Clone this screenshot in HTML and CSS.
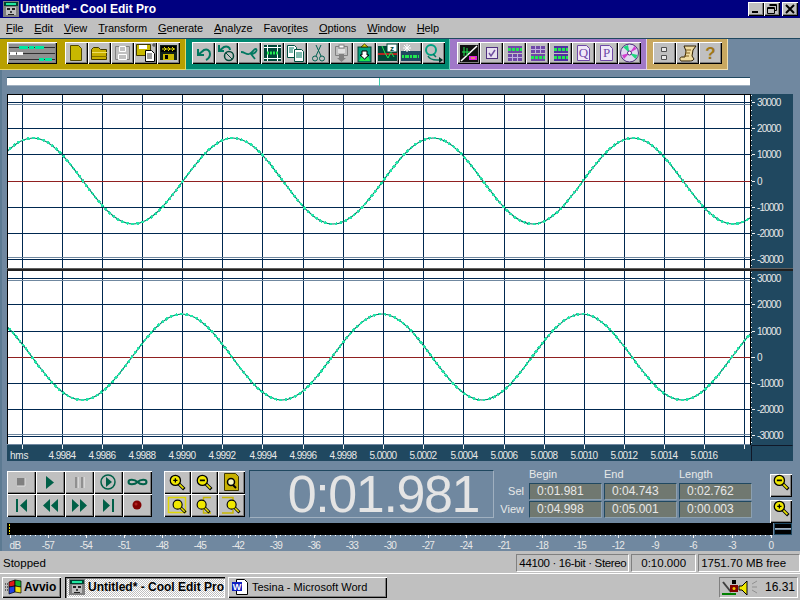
FILE: index.html
```html
<!DOCTYPE html>
<html>
<head>
  <title>Cool Edit Pro</title>
  <meta charset="UTF-8">
  <link rel="stylesheet" href="styles.css">
</head>
<body>
  <svg class="defs" width="0" height="0">
    <symbol id="app" viewBox="0 0 16 16">
      <rect width="16" height="16" fill="#808080"/>
      <rect x="1" y="1" width="14" height="4" fill="#004030"/>
      <rect x="3" y="2" width="10" height="2" fill="#20e8a0"/>
      <rect x="3" y="6" width="10" height="8" fill="#c0c0c0"/>
      <rect x="4" y="7" width="3" height="2" fill="#202020"/>
      <rect x="9" y="7" width="3" height="2" fill="#202020"/>
      <rect x="7" y="10" width="2" height="2" fill="#404040"/>
      <rect x="5" y="13" width="6" height="1" fill="#202020"/>
    </symbol>
    <symbol id="mag" viewBox="0 0 20 20">
      <line x1="11" y1="11" x2="18" y2="18" stroke="#000" stroke-width="4"/>
      <line x1="11" y1="11" x2="17" y2="17" stroke="#e8e000" stroke-width="2"/>
      <circle cx="7.5" cy="7.5" r="6" fill="#f0e800" stroke="#000" stroke-width="1.5"/>
    </symbol>
  </svg>

  <div class="titlebar">
    <svg class="app-icon"><use href="#app"/></svg>
    <span class="title-text">Untitled* - Cool Edit Pro</span>
    <div class="win-buttons">
      <div class="win-btn"><svg width="16" height="14"><rect x="4" y="9" width="6" height="2" fill="#000"/></svg></div>
      <div class="win-btn"><svg width="16" height="14"><path d="M5.5 2.5h7v6h-2M3.5 5.5h7v6h-7zM3.5 6.5h7M5.5 3.5h7" fill="none" stroke="#000"/></svg></div>
      <div class="win-btn win-close"><svg width="16" height="14"><path d="M4 3l8 8M12 3l-8 8" stroke="#000" stroke-width="2"/></svg></div>
    </div>
  </div>

  <div class="menubar">
    <span><u>F</u>ile</span>
    <span><u>E</u>dit</span>
    <span><u>V</u>iew</span>
    <span><u>T</u>ransform</span>
    <span><u>G</u>enerate</span>
    <span><u>A</u>nalyze</span>
    <span>Favo<u>r</u>ites</span>
    <span><u>O</u>ptions</span>
    <span><u>W</u>indow</span>
    <span><u>H</u>elp</span>
  </div>

  <div class="toolbar">
    <div class="group group-yellow">
      <div class="btn btn-wide">
        <svg width="50" height="22" viewBox="0 0 50 22">
          <rect x="2" y="2" width="46" height="18" fill="#909090"/>
          <path d="M2 5.5h46M2 11.5h46M2 17.5h46" stroke="#303030"/>
          <path d="M12 5.5h26" stroke="#00e8a0" stroke-width="3" stroke-dasharray="9 1 5 1"/>
          <path d="M3 11.5h13" stroke="#fff" stroke-width="3" stroke-dasharray="6 1 6 1"/>
          <path d="M32 17.5h13" stroke="#00e8a0" stroke-width="3" stroke-dasharray="5 1 7 1"/>
        </svg>
      </div>
      <div class="btn-gap"></div>
      <div class="btn"><svg width="23" height="22"><path d="M5.5 3.500h8l3 3v12h-11z" fill="#c8b800" stroke="#504800"/></svg></div>
      <div class="btn"><svg width="23" height="22"><path d="M3.500 7.500l2-2h5l2 2h6v10h-15z" fill="#c8b000" stroke="#403800"/><path d="M4 10.500h15" stroke="#f0e060"/><path d="M4 14.500h15" stroke="#807000"/></svg></div>
      <div class="btn"><svg width="23" height="22"><path d="M4.500 4.500h14v13h-14z" fill="none" stroke="#808080"/><path d="M8.500 4.500h6v5h-6zM7.500 12.500h8v5h-8z" fill="#c0c0c0" stroke="#fff"/></svg></div>
      <div class="btn"><svg width="23" height="22"><path d="M2.500 2.500h14v11h-14z" fill="#c8b800" stroke="#403800"/><rect x="5" y="3" width="8" height="4" fill="#fff"/><path d="M18 3h3M20 1v4" stroke="#404040"/><path d="M11.500 8.500h6l3 3v8h-9z" fill="#fff" stroke="#000"/><path d="M13 12h5M13 14h5M13 16h5" stroke="#404040"/></svg></div>
      <div class="btn"><svg width="23" height="22"><rect x="3" y="3" width="17" height="15" fill="#102018"/><rect x="4" y="4" width="15" height="6" fill="#000"/><path d="M5 7h13" stroke="#e8e000" stroke-width="1"/><path d="M7 5l2 2-2 2M11 5l2 2-2 2M15 5l2 2-2 2" stroke="#e8e000" fill="none"/><rect x="6" y="12" width="11" height="6" fill="#c8b800"/><rect x="8" y="13" width="3" height="4" fill="#000"/></svg></div>
    </div>

    <div class="group group-green">
      <div class="btn"><svg width="23" height="22"><path d="M6 7v6h6M6 13l6-5c3-1 6 0 6 4s-2 5-4 6" fill="none" stroke="#007860" stroke-width="2"/></svg></div>
      <div class="btn"><svg width="23" height="22"><path d="M4 3v6h5M4 9l5-4c3-1 6 0 6 3" fill="none" stroke="#007860" stroke-width="2"/><circle cx="14" cy="14" r="4.500" fill="none" stroke="#004838" stroke-width="1.500"/><path d="M11 11l6 6" stroke="#004838"/></svg></div>
      <div class="btn"><svg width="23" height="22"><path d="M3 10c4 0 5 3 8 2 4-1 5-6 7-5 2 2-2 5-5 5l4 5" fill="none" stroke="#007860" stroke-width="1.800"/></svg></div>
      <div class="btn"><svg width="23" height="22"><rect x="3" y="3" width="17" height="16" fill="#004838"/><path d="M6.500 3v16M16.500 3v16M3 5.500h17M3 16.500h17" stroke="#fff"/><path d="M6 11h11" stroke="#20e850" stroke-width="3" stroke-dasharray="2 1"/></svg></div>
      <div class="btn"><svg width="23" height="22"><path d="M3.500 3.500h7l2 2v10h-9z" fill="#fff" stroke="#005040"/><path d="M10.500 7.500h7l2 2v10h-9z" fill="#fff" stroke="#005040"/><path d="M5 6h5M5 8h4M5 10h4M12 11h6M12 13h6M12 15h6" stroke="#007860"/></svg></div>
      <div class="btn"><svg width="23" height="22"><path d="M9 3l5 11M14 3l-5 11" stroke="#006050"/><circle cx="8" cy="16.500" r="2.500" fill="none" stroke="#006050"/><circle cx="15" cy="16.500" r="2.500" fill="none" stroke="#006050"/></svg></div>
      <div class="btn"><svg width="23" height="22"><path d="M5.500 4.500h12v9h-12z" fill="#c0c0c0" stroke="#808080"/><rect x="9" y="3" width="5" height="3" fill="#fff" stroke="#808080"/><path d="M8 8h7M8 10h7" stroke="#fff"/><path d="M9 12h5v4h2l-4.500 4-4.500-4h2z" fill="#808080"/></svg></div>
      <div class="btn"><svg width="23" height="22"><rect x="5" y="5" width="13" height="15" fill="#00a080" stroke="#004030"/><path d="M8 5l3.500-3 3.500 3z" fill="#e8e000" stroke="#404000"/><path d="M6 19l3-5 3 4 3-4 2 5" fill="#20e850"/><path d="M9 9h5v4h2l-4.500 4-4.500-4h2z" fill="#fff" stroke="#000"/></svg></div>
      <div class="btn"><svg width="23" height="22"><rect x="2" y="4" width="19" height="15" fill="#004838"/><path d="M2 12h19" stroke="#f01818" stroke-width="1.500"/><path d="M6 4l3 7 3 5 3-6 3 5" fill="none" stroke="#20e850"/><rect x="11" y="2" width="10" height="8" fill="#fff" stroke="#004838"/><text class="ico-letter" x="16" y="9">z</text></svg></div>
      <div class="btn"><svg width="23" height="22"><rect x="2" y="9" width="20" height="10" fill="#204860"/><path d="M3 14.500h17" stroke="#20e850" stroke-width="3" stroke-dasharray="2 1 4 1"/><path d="M8 2v8M4 6h8M5 3l6 6M11 3l-6 6" stroke="#fff"/></svg></div>
      <div class="btn"><svg width="23" height="22"><circle cx="9" cy="8" r="5" fill="none" stroke="#00a080" stroke-width="2"/><path d="M11 12l3 3M6 14c2 4 6 4 9 4h5" fill="none" stroke="#007860" stroke-width="1.500"/><path d="M17 15l4 3-4 3z" fill="#003028"/></svg></div>
    </div>

    <div class="group group-purple">
      <div class="btn"><svg width="23" height="22"><rect x="3" y="3" width="18" height="17" fill="#101010"/><path d="M4 19L20 4" stroke="#fff" stroke-width="1.500"/><path d="M5 10h8M7 5v9M10 6v8" stroke="#20e850"/><rect x="12" y="14" width="8" height="4" fill="#e020e0"/><path d="M14 16h4" stroke="#e8e000"/></svg></div>
      <div class="btn"><svg width="23" height="22"><rect x="6.500" y="5.500" width="11" height="11" fill="#e8e0f0" stroke="#503080"/><path d="M9 11l2 3 4-6" stroke="#7050a0" fill="none" stroke-width="1.500"/></svg></div>
      <div class="btn"><svg width="23" height="22"><rect x="5" y="4" width="14" height="7" fill="#7048a8"/><rect x="5" y="12" width="14" height="7" fill="#7048a8"/><path d="M5 7.500h14" stroke="#20e850" stroke-width="3" stroke-dasharray="3 1"/><path d="M5 15.500h14M9.500 12v7M14.500 12v7" stroke="#c0b0e0"/></svg></div>
      <div class="btn"><svg width="23" height="22"><rect x="5" y="4" width="14" height="7" fill="#7048a8"/><rect x="5" y="12" width="14" height="7" fill="#7048a8"/><path d="M5 7.500h14M9.500 4v7M14.500 4v7" stroke="#c0b0e0"/><path d="M5 15.500h14" stroke="#20e850" stroke-width="3" stroke-dasharray="3 1"/></svg></div>
      <div class="btn"><svg width="23" height="22"><rect x="5" y="4" width="14" height="7" fill="#5030a0"/><rect x="5" y="12" width="14" height="7" fill="#5030a0"/><path d="M5 7.500h14M5 15.500h14" stroke="#20e850" stroke-width="3" stroke-dasharray="3 1"/></svg></div>
      <div class="btn"><svg width="23" height="22"><path d="M5.500 3.500h9l3 3v12h-12z" fill="#f0e8f8" stroke="#7048a8"/><text class="ico-letter ico-doc" x="11.500" y="15">Q</text></svg></div>
      <div class="btn"><svg width="23" height="22"><path d="M5.500 3.500h9l3 3v12h-12z" fill="#f0e8f8" stroke="#7048a8"/><text class="ico-letter ico-doc" x="11.500" y="15">P</text></svg></div>
      <div class="btn"><svg width="23" height="22"><circle cx="11.500" cy="11" r="9" fill="#e0d8f0" stroke="#503080"/><path d="M11.500 11L5 5l5-2zM11.500 11l8 2-2 4z" fill="#20d880"/><path d="M11.500 11L6 17l-2-4zM11.500 11l5-7 2 3z" fill="#d040d0"/><circle cx="11.500" cy="11" r="2" fill="#fff" stroke="#503080"/></svg></div>
    </div>

    <div class="group group-tan">
      <div class="btn"><svg width="23" height="22"><path d="M8.500 5.500h5v4h-5zM8.500 13.500h5v4h-5z" fill="#e8e8e8" stroke="#505050"/></svg></div>
      <div class="btn"><svg width="23" height="22"><path d="M8 4h12l-3 4-1 6 2 3c-1 2-3 2-5 2H5c-2-2-1-4 1-4h3l1-6z" fill="#f0dca0" stroke="#302000"/><path d="M10 8h5M9 11h5M8 14h5" stroke="#806020"/></svg></div>
      <div class="btn"><svg width="23" height="22"><text class="ico-help" x="11.500" y="17">?</text></svg></div>
    </div>
  </div>

  <div class="main">
    <div class="overview"><div class="overview-mark"></div></div>

    <svg class="display" width="786" height="367" viewBox="7 94 786 367">
      <rect x="7" y="94" width="786" height="367" fill="#204860"/>
      <rect x="7.500" y="94.500" width="743" height="350" fill="#fff" stroke="#000"/>

      <path class="grid" d="M22.500 95V444M62.500 95V444M102.500 95V444M142.500 95V444M182.500 95V444M222.500 95V444M262.500 95V444M303.500 95V444M343.500 95V444M383.500 95V444M423.500 95V444M463.500 95V444M504.500 95V444M544.500 95V444M584.500 95V444M624.500 95V444M664.500 95V444M704.500 95V444M744.500 95V444"/>
      <path class="grid" d="M8 102.500H750M8 128.500H750M8 154.500H750M8 207.500H750M8 233.500H750M8 259.500H750M8 278.500H750M8 304.500H750M8 331.500H750M8 383.500H750M8 409.500H750M8 436.500H750"/>
      <path class="limit" d="M8 104.500H750M8 257.500H750M8 280.500H750M8 434.500H750"/>
      <path class="zero" d="M8 181.500H750M8 357.500H750"/>

      <g clip-path="url(#wave-clip)">
        <path class="wave-line" d="M-67 224C-30.600 224-3.400 138 33 138S96.600 224 133 224S196.600 138 233 138S296.600 224 333 224S396.600 138 433 138S496.600 224 533 224S596.600 138 633 138S696.600 224 733 224S796.600 138 833 138"/>
        <path class="wave-dots" d="M-67 224C-30.600 224-3.400 138 33 138S96.600 224 133 224S196.600 138 233 138S296.600 224 333 224S396.600 138 433 138S496.600 224 533 224S596.600 138 633 138S696.600 224 733 224S796.600 138 833 138"/>
        <path class="wave-line" d="M-18 314C18.400 314 45.600 400 82 400S145.600 314 182 314S245.600 400 282 400S345.600 314 382 314S445.600 400 482 400S545.600 314 582 314S645.600 400 682 400S745.600 314 782 314"/>
        <path class="wave-dots" d="M-18 314C18.400 314 45.600 400 82 400S145.600 314 182 314S245.600 400 282 400S345.600 314 382 314S445.600 400 482 400S545.600 314 582 314S645.600 400 682 400S745.600 314 782 314"/>
      </g>
      <clipPath id="wave-clip"><rect x="8" y="95" width="742" height="349"/></clipPath>

      <rect x="7" y="268" width="786" height="3" fill="#202020"/>
      <rect x="7" y="268" width="786" height="1" fill="#606060"/>

      <path class="ruler-dots" d="M751.500 95V267M751.500 272V444"/>
      <path class="ruler-ticks" d="M752 102.500h3M752 128.500h3M752 154.500h3M752 181.500h3M752 207.500h3M752 233.500h3M752 259.500h3M752 278.500h3M752 304.500h3M752 331.500h3M752 357.500h3M752 383.500h3M752 409.500h3M752 435.500h3"/>
      <g class="ruler-y">
        <text x="757" y="106">30000</text>
        <text x="757" y="132">20000</text>
        <text x="757" y="158">10000</text>
        <text x="757" y="185">0</text>
        <text x="757" y="211">-10000</text>
        <text x="757" y="237">-20000</text>
        <text x="757" y="263">-30000</text>
        <text x="757" y="282">30000</text>
        <text x="757" y="308">20000</text>
        <text x="757" y="335">10000</text>
        <text x="757" y="361">0</text>
        <text x="757" y="387">-10000</text>
        <text x="757" y="413">-20000</text>
        <text x="757" y="439">-30000</text>
      </g>

      <path class="limit" d="M7 444.500H750"/>
      <path class="ruler-ticks" d="M22.500 445v4M62.500 445v4M102.500 445v4M142.500 445v4M182.500 445v4M222.500 445v4M262.500 445v4M303.500 445v4M343.500 445v4M383.500 445v4M423.500 445v4M463.500 445v4M504.500 445v4M544.500 445v4M584.500 445v4M624.500 445v4M664.500 445v4M704.500 445v4M744.500 445v4"/>
      <path class="ruler-corner" d="M751.500 461V445.500H792.500"/>
      <g class="ruler-x">
        <text class="ruler-hms" x="10" y="459">hms</text>
        <text x="62" y="459">4.9984</text>
        <text x="102" y="459">4.9986</text>
        <text x="142" y="459">4.9988</text>
        <text x="182" y="459">4.9990</text>
        <text x="222" y="459">4.9992</text>
        <text x="263" y="459">4.9994</text>
        <text x="303" y="459">4.9996</text>
        <text x="343" y="459">4.9998</text>
        <text x="383" y="459">5.0000</text>
        <text x="423" y="459">5.0002</text>
        <text x="464" y="459">5.0004</text>
        <text x="504" y="459">5.0006</text>
        <text x="544" y="459">5.0008</text>
        <text x="584" y="459">5.0010</text>
        <text x="624" y="459">5.0012</text>
        <text x="664" y="459">5.0014</text>
        <text x="704" y="459">5.0016</text>
      </g>
    </svg>

    <div class="transport">
      <div class="transport-grid">
        <div class="btn btn-t"><svg width="29" height="23"><rect x="10" y="7" width="8" height="8" fill="#808080"/><path d="M18 7v8h-8" fill="none" stroke="#e0e0e0"/></svg></div>
        <div class="btn btn-t"><svg width="29" height="23"><path d="M10 5l8 6.500-8 6.500z" fill="#006048"/></svg></div>
        <div class="btn btn-t"><svg width="29" height="23"><path d="M10 6h3v11h-3zM16 6h3v11h-3z" fill="#909090"/><path d="M13 6v11M19 6v11" stroke="#f0f0f0"/></svg></div>
        <div class="btn btn-t"><svg width="29" height="23"><circle cx="14" cy="11" r="7" fill="none" stroke="#006048" stroke-width="1.500"/><path d="M12 6l6 5-6 5z" fill="#006048"/></svg></div>
        <div class="btn btn-t"><svg width="29" height="23"><path d="M14.500 11c-3-3-9-3-9 0s6 3 9 0c3-3 9-3 9 0s-6 3-9 0z" fill="none" stroke="#006048" stroke-width="2"/></svg></div>
        <div class="btn btn-t"><svg width="29" height="23"><path d="M9 5h2v13h-2zM20 5v13l-7-6.500z" fill="#006048"/></svg></div>
        <div class="btn btn-t"><svg width="29" height="23"><path d="M14 5v13l-7-6.500zM22 5v13l-7-6.500z" fill="#006048"/></svg></div>
        <div class="btn btn-t"><svg width="29" height="23"><path d="M7 5v13l7-6.500zM15 5v13l7-6.500z" fill="#006048"/></svg></div>
        <div class="btn btn-t"><svg width="29" height="23"><path d="M9 5v13l7-6.500zM18 5h2v13h-2z" fill="#006048"/></svg></div>
        <div class="btn btn-t"><svg width="29" height="23"><circle cx="14" cy="11" r="4.500" fill="#800000"/><circle cx="13" cy="10" r="1.500" fill="#b02020"/></svg></div>
      </div>

      <div class="zoom-grid">
        <div class="btn btn-z"><svg class="z-mag" width="17" height="17" viewBox="0 0 20 20"><use href="#mag"/><path d="M5 7.500h5M7.500 5v5" stroke="#000" stroke-width="1.500"/></svg></div>
        <div class="btn btn-z"><svg class="z-mag" width="17" height="17" viewBox="0 0 20 20"><use href="#mag"/><path d="M4.500 7.500h6" stroke="#000" stroke-width="2"/></svg></div>
        <div class="btn btn-z"><svg width="27" height="23"><path d="M6.500 2.500h11l3 3v14h-14z" fill="#c8b000" stroke="#403800"/><circle cx="13" cy="11" r="3.500" fill="#f8f8c0" stroke="#000" stroke-width="1.500"/><path d="M15 14l3 3" stroke="#000" stroke-width="2"/></svg></div>
        <div class="btn btn-z"><svg width="27" height="23"><rect x="4.500" y="3.500" width="17" height="15" fill="none" stroke="#e0d800" stroke-width="1.500"/><use href="#mag" x="8" y="5" width="15" height="15"/></svg></div>
        <div class="btn btn-z"><svg width="27" height="23"><path d="M20 3.500H12.500v3M12.500 15v4H20" fill="none" stroke="#c8b800" stroke-width="1.500"/><use href="#mag" x="5" y="5" width="15" height="15"/></svg></div>
        <div class="btn btn-z"><svg width="27" height="23"><path d="M4 3.500h11v3M15 16v3H4" fill="none" stroke="#c8b800" stroke-width="1.500"/><use href="#mag" x="8" y="5" width="15" height="15"/></svg></div>
      </div>

      <div class="lcd">0:01.981</div>

      <div class="sel-table">
        <span></span><span class="sel-head">Begin</span><span class="sel-head">End</span><span class="sel-head">Length</span>
        <span class="sel-label">Sel</span><span class="sel-val">0:01.981</span><span class="sel-val">0:04.743</span><span class="sel-val">0:02.762</span>
        <span class="sel-label">View</span><span class="sel-val">0:04.998</span><span class="sel-val">0:05.001</span><span class="sel-val">0:00.003</span>
      </div>

      <div class="zoom-side">
        <div class="btn btn-s"><svg class="z-mag" width="17" height="17" viewBox="0 0 20 20"><use href="#mag"/><path d="M4.500 7.500h6" stroke="#000" stroke-width="2"/></svg></div>
        <div class="btn btn-s"><svg class="z-mag" width="17" height="17" viewBox="0 0 20 20"><use href="#mag"/><path d="M5 7.500h5M7.500 5v5" stroke="#000" stroke-width="1.500"/></svg></div>
      </div>
    </div>

    <div class="meter">
      <div class="meter-bar"><div class="meter-mark"></div></div>
      <div class="meter-peak"></div>
    </div>

    <svg class="db-scale" width="800" height="16" viewBox="0 535 800 16">
      <path class="ruler-ticks" d="M10.500 535v3M48.500 535v3M86.500 535v3M124.500 535v3M162.500 535v3M200.500 535v3M238.500 535v3M276.500 535v3M314.500 535v3M352.500 535v3M390.500 535v3M428.500 535v3M466.500 535v3M504.500 535v3M542.500 535v3M580.500 535v3M618.500 535v3M655.500 535v3M693.500 535v3M732.500 535v3M771.500 535v3"/>
      <path class="ruler-dots" d="M10 535.500H772"/>
      <g class="ruler-db">
        <text x="15" y="549">dB</text>
        <text x="48" y="549">-57</text>
        <text x="86" y="549">-54</text>
        <text x="124" y="549">-51</text>
        <text x="162" y="549">-48</text>
        <text x="200" y="549">-45</text>
        <text x="238" y="549">-42</text>
        <text x="276" y="549">-39</text>
        <text x="314" y="549">-36</text>
        <text x="352" y="549">-33</text>
        <text x="390" y="549">-30</text>
        <text x="428" y="549">-27</text>
        <text x="466" y="549">-24</text>
        <text x="504" y="549">-21</text>
        <text x="542" y="549">-18</text>
        <text x="580" y="549">-15</text>
        <text x="618" y="549">-12</text>
        <text x="655" y="549">-9</text>
        <text x="693" y="549">-6</text>
        <text x="732" y="549">-3</text>
        <text x="771" y="549">0</text>
      </g>
    </svg>
  </div>

  <div class="statusbar">
    <span class="status-text">Stopped</span>
    <span class="status-field field-format">44100 · 16-bit · Stereo</span>
    <span class="status-field field-length">0:10.000</span>
    <span class="status-field field-free">1751.70 MB free</span>
  </div>

  <div class="taskbar">
    <div class="task-btn task-start">
      <svg width="18" height="16" viewBox="0 0 18 16">
        <path d="M0 5h4M0 8h4M0 11h4" stroke="#000" stroke-dasharray="1 1"/>
        <path d="M4 3l6-2v6l-6 1z" fill="#e01818" stroke="#000" stroke-width=".7"/>
        <path d="M10 1l6 1v6l-6-1z" fill="#18b030" stroke="#000" stroke-width=".7"/>
        <path d="M4 8l6-1v6l-6 2z" fill="#2040e0" stroke="#000" stroke-width=".7"/>
        <path d="M10 7l6 1v6l-6-1z" fill="#f0e010" stroke="#000" stroke-width=".7"/>
      </svg>
      <span>Avvio</span>
    </div>
    <div class="task-btn task-active">
      <svg class="task-app" width="16" height="16"><use href="#app"/></svg>
      <span>Untitled* - Cool Edit Pro</span>
    </div>
    <div class="task-btn task-word">
      <svg width="18" height="16" viewBox="0 0 18 16">
        <path d="M5.500.5h8l3 3v12h-11z" fill="#fff" stroke="#000"/>
        <rect x="1" y="3" width="10" height="9" fill="#1020c0"/>
        <text class="ico-word" x="6" y="11">W</text>
      </svg>
      <span>Tesina - Microsoft Word</span>
    </div>
    <div class="tray">
      <svg width="30" height="18" viewBox="0 0 30 18">
        <path d="M2 4l8 10" stroke="#404040" stroke-width="2"/>
        <path d="M1 16h14" stroke="#008000" stroke-width="2"/>
        <rect x="11" y="2" width="4" height="4" fill="#000"/>
        <rect x="9" y="7" width="8" height="7" fill="#800000"/>
        <circle cx="13" cy="10.500" r="1.500" fill="#f0c000"/>
        <path d="M18 8h3l5-5v14l-5-5h-3z" fill="#f0e800" stroke="#000"/>
      </svg>
      <svg class="tray-waves" width="6" height="14"><path d="M0 4l5-3M0 7h5M0 10l5 3" stroke="#909090"/></svg>
      <span class="clock">16.31</span>
    </div>
  </div>
</body>
</html>
```

FILE: styles.css
```css
html, body {
  margin: 0;
  padding: 0;
}

body {
  width: 800px;
  height: 600px;
  overflow: hidden;
  font-family: "Liberation Sans", Arial, sans-serif;
  font-size: 11px;
  color: #000;
  background-color: #c0c0c0;
  display: flex;
  flex-direction: column;
}

svg {
  display: block;
}

.defs {
  position: absolute;
}

/* title bar */
.titlebar {
  height: 18px;
  flex: none;
  display: flex;
  align-items: center;
  background-color: #000080;
  color: #fff;
}

.app-icon {
  width: 16px;
  height: 16px;
  margin-left: 3px;
}

.title-text {
  margin-left: 1px;
  font-size: 12px;
  font-weight: bold;
}

.win-buttons {
  margin-left: auto;
  margin-right: 2px;
  display: flex;
}

.win-btn {
  width: 16px;
  height: 14px;
  background-color: #c0c0c0;
  box-shadow: inset 1px 1px 0 #fff, inset -1px -1px 0 #000, inset -2px -2px 0 #808080;
}

.win-close {
  margin-left: 2px;
}

/* menu */
.menubar {
  height: 20px;
  flex: none;
  display: flex;
  align-items: center;
  gap: 11px;
  padding-left: 6px;
  letter-spacing: -0.1px;
}

/* toolbar */
.toolbar {
  height: 32px;
  flex: none;
  display: flex;
  background-color: #7088a0;
  border-top: 1px solid #204860;
  box-sizing: border-box;
}

.group {
  display: flex;
  align-items: center;
  box-sizing: border-box;
  padding-bottom: 2px;
}

.group-yellow {
  width: 186px;
  padding-left: 7px;
  background-color: #b8a000;
  border-right: 1px solid #e8d860;
  border-bottom: 1px solid #e8d860;
}

.group-green {
  width: 264px;
  padding-left: 6px;
  background-color: #008870;
  border-right: 1px solid #60d0b8;
  border-bottom: 1px solid #60d0b8;
}

.group-purple {
  width: 197px;
  padding-left: 7px;
  background-color: #a078c8;
  border-right: 1px solid #e0d0f0;
  border-bottom: 1px solid #e0d0f0;
}

.group-tan {
  width: 81px;
  padding-left: 6px;
  background-color: #c8a860;
  border-right: 1px solid #f0e0b0;
  border-bottom: 1px solid #f0e0b0;
}

.btn {
  width: 23px;
  height: 22px;
  flex: none;
  background-color: #c0c0c0;
  box-shadow: inset 1px 1px 0 #fff, inset -1px -1px 0 #000, inset -2px -2px 0 #808080;
}

.btn-wide {
  width: 50px;
}

.btn-gap {
  width: 8px;
}

.ico-letter {
  font-size: 8px;
  font-weight: bold;
  text-anchor: middle;
  fill: #004838;
}

.ico-doc {
  font-family: "Liberation Serif", serif;
  font-size: 13px;
  font-weight: normal;
  fill: #7048a8;
}

.ico-help {
  font-size: 17px;
  font-weight: bold;
  text-anchor: middle;
  fill: #a07818;
}

.ico-word {
  font-size: 9px;
  font-weight: bold;
  text-anchor: middle;
  fill: #fff;
}

/* main slate panel */
.main {
  flex: none;
  height: 481px;
  background-color: #7088a0;
  box-shadow: inset 2px 0 0 #5c7a92;
  display: flex;
  flex-direction: column;
}

.overview {
  position: relative;
  height: 9px;
  width: 743px;
  margin: 7px 0 8px 7px;
  box-sizing: border-box;
  background-color: #fff;
  border-top: 1px solid #204860;
  border-bottom: 1px solid #a0b0c0;
}

.overview-mark {
  position: absolute;
  left: 372px;
  top: 0;
  width: 1px;
  height: 8px;
  background-color: #40d0b0;
}

.display {
  margin-left: 7px;
  flex: none;
}

.grid {
  fill: none;
  stroke: #002850;
}

.limit {
  fill: none;
  stroke: #7088a0;
}

.zero {
  fill: none;
  stroke: #902020;
}

.wave-line {
  fill: none;
  stroke: #007868;
  stroke-width: 1.2;
}

.wave-dots {
  fill: none;
  stroke: #20e8a8;
  stroke-width: 2.6;
  stroke-dasharray: 2.6 2.6;
  shape-rendering: crispEdges;
}

.ruler-dots {
  fill: none;
  stroke: #fff;
  stroke-dasharray: 1 4;
}

.ruler-ticks {
  fill: none;
  stroke: #f0f0f0;
}

.ruler-corner {
  fill: none;
  stroke: #101828;
}

.ruler-y text,
.ruler-x text,
.ruler-db text {
  font-size: 10px;
  fill: #e8e8e8;
}

.ruler-y text {
  letter-spacing: -0.9px;
}

.ruler-x text {
  text-anchor: middle;
  letter-spacing: -0.6px;
}

.ruler-x .ruler-hms {
  text-anchor: start;
  letter-spacing: -0.2px;
}

.ruler-db text {
  text-anchor: middle;
  letter-spacing: -0.7px;
}

/* transport row */
.transport {
  height: 48px;
  margin-top: 9px;
  padding-left: 7px;
  flex: none;
  display: flex;
}

.transport-grid {
  display: grid;
  grid-template-columns: repeat(5, 29px);
  grid-auto-rows: 23px;
  margin-top: 1px;
}

.btn-t {
  width: 29px;
  height: 23px;
}

.zoom-grid {
  display: grid;
  grid-template-columns: repeat(3, 27px);
  grid-auto-rows: 23px;
  margin: 1px 0 0 12px;
}

.btn-z {
  width: 27px;
  height: 23px;
}

.z-mag {
  margin: 3px 0 0 5px;
}

.lcd {
  width: 245px;
  height: 48px;
  margin-left: 4px;
  box-sizing: border-box;
  padding-right: 14px;
  border: 1px solid;
  border-color: #204860 #a0b0c0 #a0b0c0 #204860;
  font-size: 52px;
  line-height: 46px;
  letter-spacing: -1.4px;
  text-align: right;
  color: #e4e4e4;
}

.sel-table {
  width: 256px;
  display: grid;
  grid-template-columns: 33px 73px 73px 73px;
  grid-template-rows: 12px 17px 17px;
  column-gap: 2px;
  row-gap: 1px;
  color: #e8e8e8;
}

.sel-head {
  line-height: 10px;
  white-space: nowrap;
  position: relative;
  top: -1px;
}

.sel-label {
  font-size: 11px;
  line-height: 17px;
  text-align: right;
  padding-right: 3px;
}

.sel-val {
  background-color: #707870;
  box-sizing: border-box;
  border: 1px solid;
  border-color: #204860 #8ca0b0 #8ca0b0 #204860;
  padding-left: 7px;
  font-size: 12px;
  line-height: 15px;
}

.zoom-side {
  margin: 1px 0 0 20px;
}

.btn-s {
  width: 22px;
  height: 23px;
}

.btn-s .z-mag {
  margin: 3px 0 0 3px;
}

/* level meter */
.meter {
  height: 12px;
  margin: 5px 8px 0 7px;
  flex: none;
  display: flex;
  gap: 1px;
}

.meter-bar {
  flex: 1;
  background-color: #000;
  position: relative;
}

.meter-mark {
  position: absolute;
  left: 2px;
  top: 1px;
  width: 1px;
  height: 10px;
  background-image: repeating-linear-gradient(#f0e000 0 2px, #000 2px 3px);
}

.meter-peak {
  width: 18px;
  box-sizing: border-box;
  border: 1px solid #204860;
  background-image: linear-gradient(#000 0 4px, #a0b0c0 4px 5px, #7088a0 5px 6px, #000 6px 10px);
}

/* status bar */
.statusbar {
  height: 23px;
  flex: none;
  display: flex;
  align-items: flex-start;
  box-sizing: border-box;
  padding-top: 3px;
  border-bottom: 1px solid #fff;
}

.status-text {
  width: 517px;
  padding-left: 3px;
  box-sizing: border-box;
  line-height: 18px;
  font-size: 11.500px;
}

.status-field {
  height: 18px;
  box-sizing: border-box;
  line-height: 16px;
  border: 1px solid;
  border-color: #808080 #fff #fff #808080;
  margin-right: 2px;
  font-size: 11.500px;
  white-space: nowrap;
}

.field-format {
  width: 113px;
  padding-left: 2px;
  letter-spacing: -0.35px;
}

.field-length {
  width: 65px;
  text-align: center;
}

.field-free {
  width: 102px;
  margin-right: 0;
  padding-left: 2px;
}

/* taskbar */
.taskbar {
  height: 26px;
  flex: none;
  display: flex;
  align-items: center;
  padding-left: 2px;
  box-sizing: border-box;
}

.task-btn {
  height: 21px;
  box-sizing: border-box;
  display: flex;
  align-items: center;
  gap: 3px;
  padding-left: 3px;
  background-color: #c0c0c0;
  box-shadow: inset 1px 1px 0 #fff, inset -1px -1px 0 #000, inset -2px -2px 0 #808080;
  white-space: nowrap;
}

.task-start {
  width: 59px;
  font-size: 12px;
  font-weight: bold;
  gap: 1px;
}

.task-active {
  width: 160px;
  margin-left: 4px;
  padding-left: 4px;
  font-size: 12px;
  font-weight: bold;
  background-image: repeating-conic-gradient(#fff 0 25%, #c0c0c0 0 50%);
  background-size: 2px 2px;
  box-shadow: inset 1px 1px 0 #000, inset 2px 2px 0 #808080, inset -1px -1px 0 #fff;
}

.task-word {
  width: 159px;
  margin-left: 3px;
  font-size: 11px;
}

.tray {
  width: 79px;
  height: 21px;
  margin-left: auto;
  margin-right: 2px;
  box-sizing: border-box;
  display: flex;
  align-items: center;
  padding-left: 1px;
  border: 1px solid;
  border-color: #808080 #fff #fff #808080;
  font-size: 12px;
}

.tray-waves {
  margin-left: 1px;
}

.clock {
  margin-left: 7px;
}
```
